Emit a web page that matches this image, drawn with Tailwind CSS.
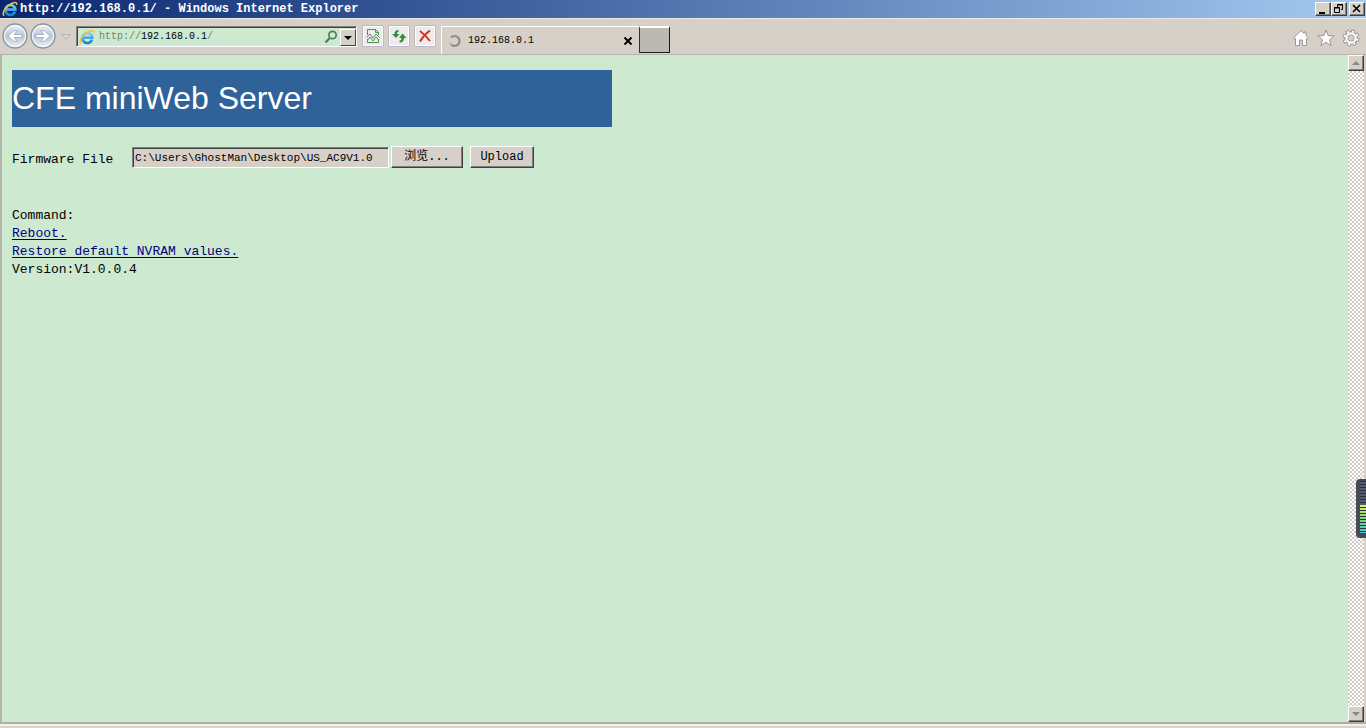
<!DOCTYPE html>
<html lang="zh-CN">
<head>
<meta charset="utf-8">
<title>http://192.168.0.1/ - Windows Internet Explorer</title>
<script src="https://cdn.jsdelivr.net/npm/@tailwindcss/browser@4"></script>
</head>
<body class="relative flex h-screen flex-col overflow-hidden bg-[#d6d0c8] font-['Liberation_Mono','Noto_Sans_CJK_SC',monospace] text-black">
<svg class="absolute size-0" aria-hidden="true">
  <defs>
    <linearGradient id="blue" x1="0" y1="0" x2="0" y2="1"><stop offset="0" stop-color="#7fd0f7"/><stop offset="1" stop-color="#1a7fd0"/></linearGradient>
    <linearGradient id="orb" x1="0" y1="0" x2="0" y2="1"><stop offset="0" stop-color="#f2f4f8"/><stop offset=".5" stop-color="#b9c5d6"/><stop offset="1" stop-color="#eef3f9"/></linearGradient>
    <symbol id="ie" viewBox="0 0 16 16">
      <path d="M13 10.800A5 5 0 1 1 13.300 8.600H4.200" fill="none" stroke="url(#blue)" stroke-width="2.600"/>
      <path d="M2.200 14.600C-.6 12.800 3 6.500 8 3.300c3.600-2.300 7.200-2.800 6.700.6" fill="none" stroke="#f2c13a" stroke-width="1.500"/>
    </symbol>
  </defs>
</svg>

<header class="flex h-[18px] shrink-0 items-center bg-linear-to-r from-[#0b2670] to-[#a6caf0] pr-px pl-0.5 text-white">
  <svg class="size-4"><use href="#ie"/></svg>
  <h1 class="ml-0.5 flex-1 text-[12px] leading-4 font-bold">http://192.168.0.1/ - Windows Internet Explorer</h1>
  <div class="flex text-black">
    <button aria-label="Minimize" class="h-[14px] w-4 border border-t-white border-r-[#404040] border-b-[#404040] border-l-white bg-[#d6d0c8] shadow-[inset_-1px_-1px_#808080]"><svg class="size-full" viewBox="0 0 14 12"><path d="M3 9h6v2H3z"/></svg></button>
    <button aria-label="Restore" class="h-[14px] w-4 border border-t-white border-r-[#404040] border-b-[#404040] border-l-white bg-[#d6d0c8] shadow-[inset_-1px_-1px_#808080]"><svg class="size-full" viewBox="0 0 14 12" fill="none" stroke="#000"><path d="M5.500 4V1.500h5v5H9M5 2h6M2.500 4.500h5v5h-5zM2 5h6"/></svg></button>
    <button aria-label="Close" class="ml-0.5 h-[14px] w-4 border border-t-white border-r-[#404040] border-b-[#404040] border-l-white bg-[#d6d0c8] shadow-[inset_-1px_-1px_#808080]"><svg class="size-full" viewBox="0 0 14 12" stroke="#000" stroke-width="1.600"><path d="M3 2l7 7M10 2L3 9"/></svg></button>
  </div>
</header>

<nav class="flex h-9 shrink-0 items-start border-t border-[#eeeae2] pl-0.5">
  <button aria-label="Back" class="mt-1 size-[26px]"><svg class="size-full" viewBox="0 0 26 26"><circle cx="13" cy="13" r="12" fill="url(#orb)" stroke="#8d939d" stroke-width="1.300"/><circle cx="13" cy="13" r="10.500" fill="none" stroke="#fff"/><path d="M20 11.500h-8l3.300-3.700h-3.600L6 13l5.700 5.200h3.600L12 14.500h8z" fill="#fff" stroke="#9aa8bb" stroke-width=".8"/></svg></button>
  <button aria-label="Forward" class="mt-1 ml-0.5 size-[26px]"><svg class="size-full" viewBox="0 0 26 26"><circle cx="13" cy="13" r="12" fill="url(#orb)" stroke="#8d939d" stroke-width="1.300"/><circle cx="13" cy="13" r="10.500" fill="none" stroke="#fff"/><path d="M6 11.500h8l-3.300-3.700h3.600L20 13l-5.700 5.200h-3.600L14 14.500H6z" fill="#fff" stroke="#9aa8bb" stroke-width=".8"/></svg></button>
  <button aria-label="Recent pages" class="mt-3.5 ml-1 h-2 w-3"><svg class="size-full" viewBox="0 0 12 8"><path d="M2 1.500h8L6 6z" fill="#ddd8d0" stroke="#b8b2aa"/></svg></button>
  <div class="mt-[7px] ml-1 flex h-[21px] w-[281px] items-center border border-t-[#808080] border-r-white border-b-white border-l-[#808080] bg-[#cde9cf] pl-0.5 shadow-[inset_1px_1px_#404040]">
    <svg class="size-4 shrink-0"><use href="#ie"/></svg>
    <div role="textbox" aria-label="Address" class="ml-1 flex-1 text-[10px] leading-4 text-[#718472]">http://<span class="text-black">192.168.0.1</span>/</div>
    <button aria-label="Search" class="mr-0.5 size-[14px]"><svg class="size-full" viewBox="0 0 14 14" fill="none" stroke="#4b7f5c"><circle cx="8.500" cy="5" r="3.700" stroke-width="1.700"/><path d="M5.800 8L1.500 12.500" stroke-width="2.200"/></svg></button>
    <button aria-label="Show addresses" class="mt-px h-[17px] w-4 border border-t-white border-r-[#404040] border-b-[#404040] border-l-white bg-[#d6d0c8]"><svg class="size-full" viewBox="0 0 14 15"><path d="M3 6h8L7 10z"/></svg></button>
  </div>
  <div class="mt-1.5 ml-[5px] flex gap-1">
    <button aria-label="Compatibility view" class="size-[22px] rounded-xs border border-[#bcb6c0] bg-[#eeebee] shadow-[inset_0_0_0_1px_#fff]"><svg class="size-full" viewBox="0 0 20 20" fill="none" stroke="#4d9350"><path d="M4.500 9V3.500h8l3 3V9M12.500 3.500v3h3M4.500 13v3.500h11V13"/><path d="M3.500 11.500L7 8l3 4 3-4 3.500 3.500M5.500 13.500L7 11l3 4 3-4 2 2.500"/></svg></button>
    <button aria-label="Refresh" class="size-[22px] rounded-xs border border-[#bcb6c0] bg-[#eeebee] shadow-[inset_0_0_0_1px_#fff]"><svg class="size-full" viewBox="0 0 20 20"><path d="M9.500 4C7 4 5.500 5 5.500 8H3l4 4 3.500-4H8c0-1.500.5-2 1.500-2zM10.500 16.500c3 0 4.500-1.500 4.500-4.500h2.500l-4-4.500-3.500 4.500h2.500c0 1.800-.5 2.500-2 2.500z" fill="#2f9137"/></svg></button>
    <button aria-label="Stop" class="size-[22px] rounded-xs border border-[#bcb6c0] bg-[#eeebee] shadow-[inset_0_0_0_1px_#fff]"><svg class="size-full" viewBox="0 0 20 20" fill="none" stroke="#c63b2c" stroke-width="2"><path d="M5 5c4 3 7 6 10 10M15 4.500C10 8 7.500 11 5 15.500"/></svg></button>
  </div>
  <div class="mt-[7px] ml-[5px] flex h-7 w-[198px] items-center border-t border-l border-white pl-1.5">
    <svg class="size-[14px]" viewBox="0 0 14 14" fill="none" stroke-width="2.200"><path d="M3 3.500A5 5 0 1 1 3 10.500" stroke="#8c8a88"/><path d="M3 10.500a5 5 0 0 1-1-2" stroke="#bdb8b2"/></svg>
    <span class="ml-1.5 flex-1 text-[10px] leading-4">192.168.0.1</span>
    <button aria-label="Close tab" class="mr-1.5 size-[10px]"><svg class="size-full" viewBox="0 0 10 10" stroke="#000" stroke-width="2"><path d="M1.500 1.500l7 7M8.500 1.500l-7 7"/></svg></button>
  </div>
  <button aria-label="New tab" class="mt-[7px] h-[27px] w-[31px] border border-t-2 border-t-white border-r-[#1c1c1c] border-b-[#1c1c1c] border-l-[#303030] bg-[#bcb8b2]"></button>
  <div class="mt-2.5 mr-1.5 ml-auto flex gap-[7px]">
    <button aria-label="Home" class="size-[18px]"><svg class="size-full" viewBox="0 0 18 18"><path d="M9 1.500L1.500 9l1.200 1.200.8-.7V16.500h4V11h3v5.500h4V9.500l.8.700L16.500 9 14 6.500V3h-2v1.500z" fill="#fff" stroke="#97938f"/></svg></button>
    <button aria-label="Favorites" class="size-[18px]"><svg class="size-full" viewBox="0 0 18 18"><path d="M9 1l2.200 5.700 6 .2-4.700 3.800 1.700 6L9 13.300l-5.200 3.400 1.700-6L.8 6.900l6-.2z" fill="#fff" stroke="#97938f"/></svg></button>
    <button aria-label="Tools" class="size-[18px]"><svg class="size-full" viewBox="0 0 18 18" fill="none"><circle cx="9" cy="9" r="6.800" stroke="#97938f" stroke-width="3.400" stroke-dasharray="3.300 2.040"/><circle cx="9" cy="9" r="4.700" stroke="#97938f" stroke-width="4"/><circle cx="9" cy="9" r="6.600" stroke="#fff" stroke-width="2" stroke-dasharray="2 3.184" stroke-dashoffset="-.7"/><circle cx="9" cy="9" r="4.600" stroke="#fff" stroke-width="2.200"/></svg></button>
  </div>
</nav>

<div class="flex min-h-0 flex-1 border-t border-l-2 border-[#b4b6a8]">
  <main class="flex-1 bg-[#cde9d0] pt-[15px] pl-[10px] text-[13px] leading-[18px]">
    <h2 class="w-[600px] bg-[#2f6298] font-['Liberation_Sans',sans-serif] text-[32px] leading-[57px] text-white">CFE miniWeb Server</h2>
    <form class="mt-[19px] flex h-[22px] items-start">
      <label for="firmware" class="mt-[5px] w-[120px]">Firmware File</label>
      <input id="firmware" type="text" value="C:\Users\GhostMan\Desktop\US_AC9V1.0" class="mt-px h-[21px] w-[257px] border border-t-[#808080] border-r-white border-b-white border-l-[#808080] bg-[#d6d0c8] px-0.5 text-[11px] shadow-[inset_1px_1px_#404040]">
      <button type="button" class="ml-0.5 h-[22px] w-[72px] border border-t-white border-r-[#404040] border-b-[#404040] border-l-white bg-[#d6d0c8] text-[12px] leading-5 shadow-[inset_-1px_-1px_#808080]">浏览...</button>
      <button type="button" class="ml-[7px] h-[22px] w-16 border border-t-white border-r-[#404040] border-b-[#404040] border-l-white bg-[#d6d0c8] text-[12px] leading-5 shadow-[inset_-1px_-1px_#808080]">Upload</button>
    </form>
    <p class="mt-[39px]">Command:</p>
    <p><a href="#reboot" class="text-[#00007c] underline underline-offset-2">Reboot.</a></p>
    <p><a href="#restore" class="text-[#00007c] underline underline-offset-2">Restore default NVRAM values.</a></p>
    <p>Version:V1.0.0.4</p>
  </main>
  <div class="mr-0.5 flex w-4 flex-col justify-between bg-[conic-gradient(#cfcac3_25%,#fff_0_50%,#cfcac3_0_75%,#fff_0)] bg-size-[4px_4px]">
    <button aria-label="Scroll up" class="h-4 w-4 border border-t-white border-r-[#404040] border-b-[#404040] border-l-white bg-[#d6d0c8] shadow-[inset_-1px_-1px_#808080]"><svg class="size-full" viewBox="0 0 14 14"><path d="M3 9h8L7 5z" fill="#8a8680"/></svg></button>
    <button aria-label="Scroll down" class="h-4 w-4 border border-t-white border-r-[#404040] border-b-[#404040] border-l-white bg-[#d6d0c8] shadow-[inset_-1px_-1px_#808080]"><svg class="size-full" viewBox="0 0 14 14"><path d="M3 5h8L7 9z" fill="#8a8680"/></svg></button>
  </div>
</div>
<footer class="h-[6px] shrink-0 border-t-2 border-[#b0aea4] bg-[#dcd3cd] shadow-[inset_0_2px_#f4f1ec]"></footer>

<div class="absolute top-[479px] right-0 h-[59px] w-[10px] rounded-l-sm border-2 border-r-0 border-[#454a54] bg-[#454a54] pl-0.5">
  <div class="h-6 bg-[repeating-linear-gradient(#2c303b_0_1px,#555b70_1px_3px)]"></div>
  <div class="h-7 bg-linear-to-b from-[#e5ef61] via-[#79d47b] to-[#43c4cf]">
    <div class="h-full bg-[repeating-linear-gradient(#0000_0_2px,#30343c_2px_3px)]"></div>
  </div>
</div>
</body>
</html>
